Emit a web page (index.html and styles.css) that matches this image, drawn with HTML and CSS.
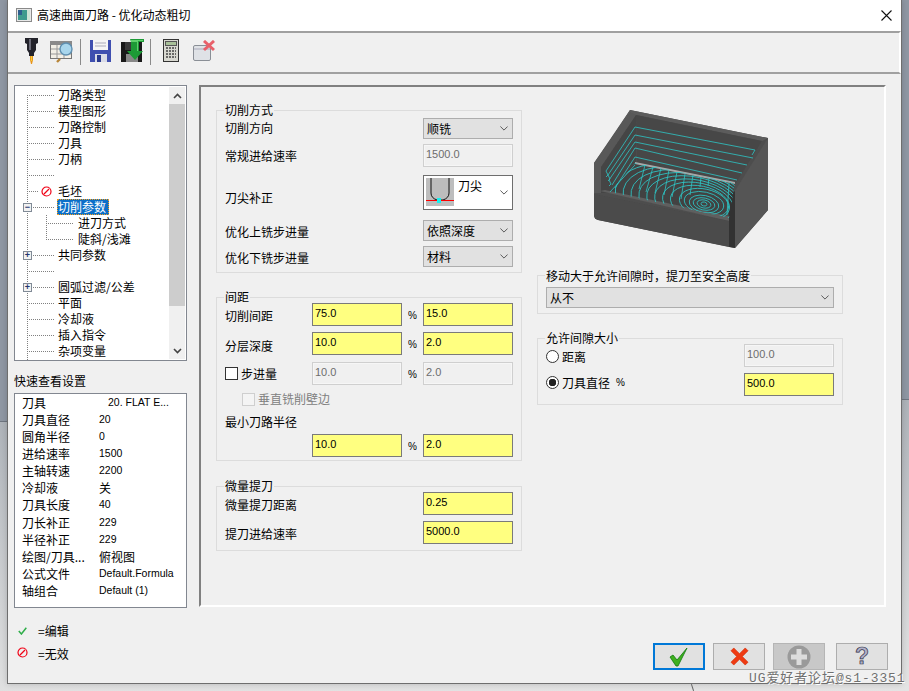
FILE: index.html
```html
<!DOCTYPE html>
<html lang="zh">
<head>
<meta charset="utf-8">
<title>高速曲面刀路 - 优化动态粗切</title>
<link rel="stylesheet" href="styles.css">
</head>
<body>
<div class="window">
  <header class="titlebar">
    <svg class="title-icon" width="16" height="14" viewBox="0 0 16 14"><rect x=".5" y=".5" width="15" height="13" fill="#e8e8e8" stroke="#8a8a8a"/><rect x="2" y="2" width="9" height="10" fill="#3f9a8e"/><rect x="2" y="2" width="4" height="5" fill="#2f5f8f"/><rect x="11" y="2" width="3" height="10" fill="#cfe3d6"/></svg>
    <span class="title-text">高速曲面刀路 - 优化动态粗切</span>
    <svg class="close" width="11" height="11" viewBox="0 0 11 11"><path d="M.5.5l10 10M10.5.5l-10 10" stroke="#111" stroke-width="1.1" fill="none"/></svg>
  </header>

  <div class="toolbar">
    <svg class="tool t-drill" width="13" height="26" viewBox="0 0 13 26"><path d="M0 0h13v5l-2 1v6l-2 3v3H4v-3l-2-3V6L0 5z" fill="#23232b"/><path d="M4 1h2v11H4z" fill="#6b6b78"/><path d="M5 18h3v4l-1 4h-1l-1-4z" fill="#e8941c"/><path d="M6 18h1v5H6z" fill="#f7d23a"/></svg>
    <svg class="tool t-table" width="24" height="23" viewBox="0 0 24 23"><rect x=".5" y="1.5" width="21" height="17" fill="#f2efe6" stroke="#777"/><path d="M0 1h22v4H0z" fill="#8a8a8a"/><path d="M1 9h20M1 14h20M7 5v13M14 5v13" stroke="#999"/><path d="M10 19l-3 3" stroke="#b8863a" stroke-width="2.4"/><circle cx="16" cy="9" r="6" fill="#a9d6ec" stroke="#5f8fb0" stroke-width="1.4"/></svg>
    <span class="tool-sep"></span>
    <svg class="tool t-save" width="21" height="23" viewBox="0 0 21 23"><path d="M0 1h21v22H0z" fill="#3f4fb0"/><path d="M3 1h15v10H3z" fill="#f4f4f6"/><path d="M5 4h11M5 7h11" stroke="#aab"/><path d="M5 15h12v8H5z" fill="#d9dbe6"/><path d="M7 16h4v7H7z" fill="#2a3a90"/></svg>
    <svg class="tool t-saveas" width="24" height="24" viewBox="0 0 24 24"><path d="M0 3h21v20H0z" fill="#191919"/><path d="M4 3h12v8H4z" fill="#3a3a3a"/><path d="M5 15h12v8H5z" fill="#888"/><path d="M9 0h14v3h-5v9h4L14 21 6 12h4V3z" fill="#1d9a36"/><path d="M10 1h12v1h-5v10h-1V3h-6z" fill="#5fd26d"/></svg>
    <span class="tool-sep t-sep2"></span>
    <svg class="tool t-calc" width="16" height="23" viewBox="0 0 16 23"><rect x=".5" y=".5" width="15" height="22" fill="#d8d8d0" stroke="#333"/><rect x="2.5" y="2.5" width="11" height="4" fill="#a8c098" stroke="#555"/><path d="M3 9h10M3 12h10M3 15h10M3 18h10" stroke="#444" stroke-width="1.6" stroke-dasharray="2 1"/></svg>
    <svg class="tool t-close" width="22" height="21" viewBox="0 0 22 21"><rect x=".5" y="5.500" width="17" height="15" rx="1.500" fill="#dfe2e6" stroke="#8a8f96"/><path d="M1 9h16" stroke="#aab"/><path d="M11 1l10 9M21 1l-10 9" stroke="#e8606a" stroke-width="3"/></svg>
  </div>

  <div class="content">
    <aside class="side">
      <div class="tree">
        <ul class="tree-list">
          <li class="node"><span class="conn"></span>刀路类型</li>
          <li class="node"><span class="conn"></span>模型图形</li>
          <li class="node"><span class="conn"></span>刀路控制</li>
          <li class="node"><span class="conn"></span>刀具</li>
          <li class="node"><span class="conn"></span>刀柄</li>
          <li class="node"><span class="conn"></span></li>
          <li class="node"><span class="conn conn-icon"></span><svg class="ban" width="11" height="11" viewBox="0 0 11 11"><circle cx="5.500" cy="5.500" r="4.500" fill="none" stroke="#f00115" stroke-width="1.200"/><path d="M3 8l5-5" stroke="#f00115" stroke-width="1.200"/></svg>毛坯</li>
          <li class="node"><span class="toggle">−</span><span class="conn"></span><span class="selected">切削参数</span></li>
          <li class="node child"><span class="conn"></span>进刀方式</li>
          <li class="node child last"><span class="conn"></span>陡斜/浅滩</li>
          <li class="node"><span class="toggle">+</span><span class="conn"></span>共同参数</li>
          <li class="node"><span class="conn"></span></li>
          <li class="node"><span class="toggle">+</span><span class="conn"></span>圆弧过滤/公差</li>
          <li class="node"><span class="conn"></span>平面</li>
          <li class="node"><span class="conn"></span>冷却液</li>
          <li class="node"><span class="conn"></span>插入指令</li>
          <li class="node"><span class="conn"></span>杂项变量</li>
        </ul>
        <div class="scrollbar">
          <span class="arrow">
            <svg width="9" height="6" viewBox="0 0 9 6"><path d="M1 5l3.500-3.500L8 5" fill="none" stroke="#444" stroke-width="1.600"/></svg>
          </span>
          <span class="thumb"></span>
          <span class="arrow arrow-down">
            <svg width="9" height="6" viewBox="0 0 9 6"><path d="M1 1l3.500 3.500L8 1" fill="none" stroke="#444" stroke-width="1.600"/></svg>
          </span>
        </div>
      </div>

      <div class="quick-title">快速查看设置</div>
      <dl class="quick">
        <div class="q-row q-first"><dt>刀具</dt><dd>20. FLAT E...</dd></div>
        <div class="q-row"><dt>刀具直径</dt><dd>20</dd></div>
        <div class="q-row"><dt>圆角半径</dt><dd>0</dd></div>
        <div class="q-row"><dt>进给速率</dt><dd>1500</dd></div>
        <div class="q-row"><dt>主轴转速</dt><dd>2200</dd></div>
        <div class="q-row"><dt>冷却液</dt><dd class="cjk">关</dd></div>
        <div class="q-row"><dt>刀具长度</dt><dd>40</dd></div>
        <div class="q-row"><dt>刀长补正</dt><dd>229</dd></div>
        <div class="q-row"><dt>半径补正</dt><dd>229</dd></div>
        <div class="q-row"><dt>绘图/刀具...</dt><dd class="cjk">俯视图</dd></div>
        <div class="q-row"><dt>公式文件</dt><dd>Default.Formula</dd></div>
        <div class="q-row"><dt>轴组合</dt><dd>Default (1)</dd></div>
      </dl>

      <div class="legend-row legend-edit">
        <svg width="9" height="8" viewBox="0 0 9 8"><path d="M.8 4l2.600 3L8.300.8" fill="none" stroke="#2fae4a" stroke-width="1.500"/></svg>
        <span>=编辑</span>
      </div>
      <div class="legend-row legend-off">
        <svg class="off-icon" width="11" height="11" viewBox="0 0 11 11"><circle cx="5.500" cy="5.500" r="4.500" fill="none" stroke="#f00115" stroke-width="1.200"/><path d="M3 8l5-5" stroke="#f00115" stroke-width="1.200"/></svg>
        <span>=无效</span>
      </div>
    </aside>

    <div class="main-col">
      <main class="panel">
        <div class="col col-left">
          <fieldset class="group g-cut">
            <legend>切削方式</legend>
            <div class="row r-dir"><label>切削方向</label><div class="select">顺铣<svg class="chev" width="8" height="5" viewBox="0 0 10 6"><path d="M.5.500L5 5 9.500.500" fill="none" stroke="#555" stroke-width="1.200"/></svg></div></div>
            <div class="row r-feed"><label>常规进给速率</label><div class="input off">1500.0</div></div>
            <div class="row r-tip"><label class="tip-label">刀尖补正</label>
              <div class="tip-select">
                <svg class="tip-img" width="28" height="28" viewBox="0 0 28 28"><rect width="28" height="28" fill="#bdbdbd"/><path d="M5 0v15q0 5 6 7h6q6-2 6-7V0" fill="none" stroke="#111"/><path d="M0 22.500h28" stroke="#f00"/><rect x="11" y="20" width="4" height="5" fill="#18f0f0"/></svg>
                <span class="tip-text">刀尖</span>
                <svg class="chev" width="8" height="5" viewBox="0 0 10 6"><path d="M.5.500L5 5 9.500.500" fill="none" stroke="#555" stroke-width="1.200"/></svg>
              </div>
            </div>
            <div class="row r-up"><label>优化上铣步进量</label><div class="select">依照深度<svg class="chev" width="8" height="5" viewBox="0 0 10 6"><path d="M.5.500L5 5 9.500.500" fill="none" stroke="#555" stroke-width="1.200"/></svg></div></div>
            <div class="row r-down"><label>优化下铣步进量</label><div class="select">材料<svg class="chev" width="8" height="5" viewBox="0 0 10 6"><path d="M.5.500L5 5 9.500.500" fill="none" stroke="#555" stroke-width="1.200"/></svg></div></div>
          </fieldset>

          <fieldset class="group g-gap">
            <legend>间距</legend>
            <div class="grid-row gr-1"><label>切削间距</label><div class="input yellow">75.0</div><span class="pct">%</span><div class="input yellow">15.0</div></div>
            <div class="grid-row gr-2"><label>分层深度</label><div class="input yellow">10.0</div><span class="pct">%</span><div class="input yellow">2.0</div></div>
            <div class="grid-row gr-3"><label class="check-label"><span class="checkbox"></span>步进量</label><div class="input off">10.0</div><span class="pct">%</span><div class="input off">2.0</div></div>
            <div class="wall-row"><span class="checkbox disabled"></span>垂直铣削壁边</div>
            <div class="min-label">最小刀路半径</div>
            <div class="grid-row gr-5"><span></span><div class="input yellow">10.0</div><span class="pct">%</span><div class="input yellow">2.0</div></div>
          </fieldset>

          <fieldset class="group g-micro">
            <legend>微量提刀</legend>
            <div class="row r-m1"><label>微量提刀距离</label><div class="input yellow">0.25</div></div>
            <div class="row r-m2"><label>提刀进给速率</label><div class="input yellow">5000.0</div></div>
          </fieldset>
        </div>

        <div class="col col-right">
          <svg class="part" width="185" height="145" viewBox="0 0 185 145">
            <defs>
              <clipPath id="floor"><path d="M45 58L145 78 139 113 20 87z"/></clipPath>
              <filter id="soft"><feGaussianBlur stdDeviation=".3"/></filter>
            </defs>
            <g filter="url(#soft)">
              <path d="M40 5L178 33V105L145 143 8 115Q4 114 4 110V58z" fill="#4e4e4e"/>
              <path d="M40 5L178 33 172 36 46 10 11 62v24l-7-26z" fill="#5c5c5c"/>
              <path d="M46 10L172 36 146 78 47 58z" fill="#474747"/>
              <path d="M40 7l6 3-35 52v26H4V58z" fill="#585858"/>
              <path d="M46 10v48L22 88H11V62z" fill="#454545"/>
              <path d="M45 58L145 78 139 113 20 87z" fill="#424242"/>
              <path d="M145 86L178 33V105L145 143z" fill="#545454"/>
              <path d="M139 90l6-4v57l-6-1z" fill="#333"/>
              <path d="M10 86l5-1 124 26v5z" fill="#5e5e5e"/>
              <path d="M4 89l135 27v26L8 115q-4-1-4-5z" fill="#4b4b4b"/>
              <path d="M45 57L145 77v2L45 59z" fill="#a8a8a8"/>
              <g fill="none" stroke="#2dc7c7" stroke-width=".8">
                <path d="M45 22L165 45 162 50M45 30L163 53M45 37L157 60M45 43L152 68M45 52L147 75"/>
                <path d="M45 22L16 66l2 4-2 2M45 30L18 70l2 4-2 2M45 37L19 75l2 4-2 2M45 43L22 80M45 52L25 83"/>
                <g clip-path="url(#floor)">
                  <ellipse cx="114" cy="99" rx="3" ry="2" transform="rotate(12 114 99)"/>
                  <ellipse cx="114" cy="99" rx="7" ry="4" transform="rotate(12 114 99)"/>
                  <ellipse cx="114" cy="99" rx="11" ry="6" transform="rotate(12 114 99)"/>
                  <ellipse cx="114" cy="99" rx="15" ry="8.500" transform="rotate(12 114 99)"/>
                  <ellipse cx="114" cy="98" rx="20" ry="11" transform="rotate(12 114 98)"/>
                  <ellipse cx="114" cy="98" rx="25" ry="14" transform="rotate(12 114 98)"/>
                  <ellipse cx="110" cy="98" rx="30" ry="17" transform="rotate(12 110 98)"/>
                  <ellipse cx="108" cy="98" rx="36" ry="20" transform="rotate(12 108 98)"/>
                  <ellipse cx="106" cy="98" rx="42" ry="23" transform="rotate(12 106 98)"/>
                  <ellipse cx="104" cy="98" rx="48" ry="26" transform="rotate(12 104 98)"/>
                  <ellipse cx="102" cy="98" rx="54" ry="29" transform="rotate(12 102 98)"/>
                  <ellipse cx="100" cy="98" rx="60" ry="32" transform="rotate(12 100 98)"/>
                  <ellipse cx="98" cy="98" rx="66" ry="35" transform="rotate(12 98 98)"/>
                  <ellipse cx="96" cy="98" rx="72" ry="38" transform="rotate(12 96 98)"/>
                  <ellipse cx="94" cy="98" rx="78" ry="41" transform="rotate(12 94 98)"/>
                  <path d="M55 60l-6 24M63 62l-7 25M71 63l-6 25M79 65l-5 25M87 67l-5 25M95 69l-4 25M103 70l-3 20M111 72l-1 10M119 73l-1 8"/>
                </g>
                <path d="M139 78L137 110M20 87L45 60"/>
              </g>
            </g>
          </svg>

          <fieldset class="group g-move">
            <legend>移动大于允许间隙时，提刀至安全高度</legend>
            <div class="select wide">从不<svg class="chev" width="8" height="5" viewBox="0 0 10 6"><path d="M.5.500L5 5 9.500.500" fill="none" stroke="#555" stroke-width="1.200"/></svg></div>
          </fieldset>

          <fieldset class="group g-clear">
            <legend>允许间隙大小</legend>
            <div class="row r-c1"><label class="radio-label"><span class="radio"></span>距离</label><div class="input off">100.0</div></div>
            <div class="row r-c2"><label class="radio-label"><span class="radio on"></span>刀具直径 <span class="pct-inline">%</span></label><div class="input yellow">500.0</div></div>
          </fieldset>
        </div>
      </main>

      <footer class="buttons">
        <button class="btn default" type="button">
          <svg width="20" height="20" viewBox="0 0 20 20"><path d="M1 10l3-2 4 5L18 1 9 19H7z" fill="#3fb01f" stroke="#0f7a0f" stroke-width=".8"/></svg>
        </button>
        <button class="btn" type="button">
          <svg width="19" height="19" viewBox="0 0 20 20"><path d="M1 4l3-3 6 6 6-6 3 3-6 6 6 6-3 3-6-6-6 6-3-3 6-6z" fill="#ef3a12" stroke="#d02800" stroke-width=".6"/></svg>
        </button>
        <button class="btn disabled" type="button" disabled>
          <svg width="24" height="24" viewBox="0 0 24 24"><circle cx="12" cy="12" r="11.500" fill="#9a9a9a"/><path d="M9.500 4h5v5.500H20v5h-5.500V20h-5v-5.500H4v-5h5.500z" fill="#dcdcdc"/></svg>
        </button>
        <button class="btn help" type="button">?</button>
      </footer>
    </div>
  </div>
  <div class="watermark">UG爱好者论坛@s1-3351</div>
</div>
<div class="desk-line"></div>
</body>
</html>
```

FILE: styles.css
```css
* { box-sizing: border-box; }
html, body { margin: 0; padding: 0; }
body {
  width: 909px;
  height: 691px;
  overflow: hidden;
  position: relative;
  background: linear-gradient(178.6deg, #8f97a3 0, #8f97a3 421px, #6f7680 421px, #6f7680 422px, #aeb3b9 422px, #e4e4e4 100%);
  font: 12px/16px "Noto Sans CJK SC", "Liberation Sans", sans-serif;
  color: #000;
  padding-left: 7px;
}
.window {
  width: 895px;
  height: 684px;
  background: #f0f0f0;
  border: 1px solid #6e6e6e;
  border-top: 0;
  position: relative;
  display: flex;
  flex-direction: column;
  box-shadow: 0 0 6px rgba(0,0,0,.18);
}
.titlebar {
  height: 31px;
  flex: none;
  background: #fff;
  display: flex;
  align-items: center;
  padding: 0 9px 1px 8px;
}
.title-icon { flex: none; }
.title-text { margin-left: 5px; }
.close { margin-left: auto; }

.toolbar {
  height: 43px;
  flex: none;
  background: #f0f0f0;
  border-top: 2px solid #a0a0a0;
  border-bottom: 2px solid #a0a0a0;
  border-right: 2px solid #fff;
  display: flex;
  align-items: flex-start;
  padding-top: 5px;
}
.tool { flex: none; display: block; }
.t-drill { margin-left: 17px; }
.t-table { margin-left: 12px; margin-top: 2px; }
.tool-sep { width: 1px; height: 26px; background: #8a8a8a; margin: 1px 9px 0 6px; flex: none; }
.t-save { margin-top: 1px; }
.t-saveas { margin-left: 10px; margin-top: 1px; }
.t-sep2 { margin: 1px 12px 0 5px; }
.t-calc { margin-top: 1px; }
.t-close { margin-left: 14px; margin-top: 2px; }

.content { flex: 1; display: flex; min-height: 0; }
.side { width: 191px; flex: none; padding: 11px 0 0 6px; }
.main-col { flex: 1; min-width: 0; display: flex; flex-direction: column; }

.tree {
  width: 173px;
  height: 276px;
  background: #fff;
  border: 1px solid #828790;
  display: flex;
  overflow: hidden;
}
.tree-list {
  flex: 1;
  list-style: none;
  margin: 0;
  padding: 1px 0 0;
  background: repeating-linear-gradient(to bottom, #808080 0 1px, transparent 1px 2px) 12px 9px / 1px 100% no-repeat;
}
.node {
  height: 16px;
  display: flex;
  align-items: center;
  position: relative;
  padding-left: 12px;
  white-space: nowrap;
}
.conn {
  width: 27px;
  height: 1px;
  flex: none;
  margin-right: 4px;
  background: repeating-linear-gradient(to right, #808080 0 1px, transparent 1px 2px);
}
.conn-icon { width: 12px; margin-right: 0; }
.ban { margin: 0 6px 0 2px; flex: none; }
.toggle {
  position: absolute;
  left: 8px;
  top: 4px;
  width: 9px;
  height: 9px;
  border: 1px solid #808a96;
  background: #f2f2f2;
  font: bold 9px/7px "Liberation Sans", sans-serif;
  color: #22356e;
  text-align: center;
}
.selected {
  background: #0b6fc9;
  color: #fff;
  outline: 1px dotted #f6a01e;
  outline-offset: -1px;
  margin-left: -1px;
  padding: 0 3px 0 1px;
  line-height: 16px;
}
.child { padding-left: 31px; }
.child .conn { margin-right: 5px; }
.child::before {
  content: "";
  position: absolute;
  left: 31px;
  top: 0;
  width: 1px;
  height: 16px;
  background: repeating-linear-gradient(to bottom, #808080 0 1px, transparent 1px 2px);
}
.child.last::before { height: 9px; }
.scrollbar {
  width: 16px;
  flex: none;
  margin: 1px 1px 1px 0;
  background: #f0f0f0;
  display: flex;
  flex-direction: column;
  align-items: center;
}
.arrow { height: 17px; display: flex; align-items: center; justify-content: center; flex: none; }
.arrow-down { margin-top: auto; }
.thumb { width: 16px; height: 202px; background: #cdcdcd; flex: none; }

.quick-title { margin-top: 12px; height: 16px; }
.quick {
  width: 173px;
  height: 215px;
  margin: 4px 0 0;
  background: #fff;
  border: 1px solid #828790;
  padding: 0 0 0 7px;
}
.q-row { height: 17.090px; display: flex; line-height: 17px; }
.q-row dt { width: 77px; flex: none; white-space: nowrap; }
.q-row dd { margin: 0; white-space: nowrap; font-family: "Liberation Sans", "Noto Sans CJK SC", sans-serif; font-size: 10.500px; }
.q-row dd.cjk { font-family: "Noto Sans CJK SC", sans-serif; font-size: 12px; }
.q-first dd { margin-left: 9px; }

.legend-row { display: flex; align-items: center; height: 16px; }
.legend-row svg { flex: none; }
.legend-edit { margin-top: 15px; padding-left: 4px; }
.legend-edit span { margin-left: 11px; }
.legend-off { margin-top: 7px; padding-left: 3px; }
.legend-off span { margin-left: 10px; }
.off-icon { margin-top: -4px; }

.panel {
  width: 687px;
  height: 522px;
  margin-top: 11px;
  flex: none;
  border-top: 2px solid #808080;
  border-left: 2px solid #808080;
  border-right: 2px solid #fff;
  border-bottom: 2px solid #fff;
  display: flex;
  padding: 15px 0 0 15px;
  background: #f0f0f0;
}
.col { display: flex; flex-direction: column; flex: none; }
.col-left { width: 306px; }
.col-right { width: 306px; margin-left: 15px; }

.group {
  margin: 0;
  padding: 0 8px;
  border: 1px solid #dcdcdc;
  min-width: 0;
  width: 306px;
  flex: none;
}
.group legend {
  padding: 0 1px;
  margin-left: -1px;
  line-height: 16px;
  height: 16px;
  white-space: nowrap;
}
.g-move legend { line-height: 18px; }
.g-cut { height: 171px; }
.g-gap { height: 172px; margin-top: 16px; }
.g-micro { height: 73px; margin-top: 17px; }
.g-move { height: 47px; margin-top: 17px; }
.g-clear { height: 75px; margin-top: 16px; }

.row { display: flex; justify-content: space-between; align-items: center; }
.row > label, .grid-row > label { white-space: nowrap; display: flex; align-items: center; padding-top: 2px; }
.r-dir { height: 21px; }
.r-dir > label { padding-top: 0; padding-bottom: 1px; }
.r-feed { height: 23px; margin-top: 5px; }
.r-feed > label { padding-top: 1px; }
.r-tip { height: 35px; margin-top: 8px; }
.row > .tip-label { margin-top: 11px; padding-top: 0; }
.r-up { height: 21px; margin-top: 10px; }
.r-down { height: 21px; margin-top: 5px; }
.r-down > label { padding-top: 3px; }

.select {
  width: 90px;
  height: 100%;
  background: #e1e1e1;
  border: 1px solid #adadad;
  padding: 0 4px 0 3px;
  display: flex;
  align-items: center;
  justify-content: space-between;
}
.select.wide { width: 288px; height: 21px; }
.chev { flex: none; }

.input {
  width: 90px;
  height: 23px;
  flex: none;
  border: 1px solid #7a7a7a;
  padding: 1px 2px 0;
  line-height: 16px;
  font-family: "Liberation Sans", sans-serif;
  font-size: 11px;
}
.yellow { background: #ffff80; color: #000; }
.off { background: #f0f0f0; border-color: #cfcfcf; color: #6d6d6d; box-shadow: inset 0 0 0 1px #f6f6f6; }

.tip-select {
  width: 90px;
  height: 35px;
  background: #fff;
  border: 1px solid #6e6e6e;
  display: flex;
  padding: 2px 4px 0 2px;
}
.tip-img { flex: none; }
.tip-text { margin-left: 4px; }
.tip-select .chev { margin-left: auto; margin-top: 12px; }

.grid-row {
  display: grid;
  grid-template-columns: 87px 90px 21px 90px;
  align-items: center;
  height: 23px;
}
.pct { text-align: center; font-size: 10px; font-family: "Liberation Sans", sans-serif; padding-top: 2px; }
.g-gap legend, .g-micro legend, .g-clear legend { margin-bottom: -2px; }
.gr-2 { margin-top: 6px; }
.grid-row.gr-2 > label { padding-top: 5px; }
.gr-3 { margin-top: 7px; }
.grid-row.gr-3 > label { padding-top: 0; }
.checkbox {
  width: 13px;
  height: 13px;
  background: #fff;
  border: 1px solid #333;
  margin-right: 3px;
  flex: none;
}
.wall-row { display: flex; align-items: center; margin: 6px 0 0 17px; height: 16px; color: #808080; }
.checkbox.disabled { border-color: #cfcfcf; background: #f4f4f4; }
.min-label { margin-top: 7px; height: 16px; }
.gr-5 { margin-top: 4px; }

.r-m1 { height: 23px; }
.r-m2 { height: 23px; margin-top: 6px; }

.part { display: block; flex: none; margin: 3px 0 0 53px; height: 145px; }
.g-move .select { margin-top: 4px; }
.r-c1 { height: 23px; }
.r-c2 { height: 23px; margin-top: 6px; }
.row > .radio-label { gap: 2px; padding-top: 2px; }
.r-c2 > .radio-label { padding-top: 0; padding-bottom: 4px; }
.radio {
  width: 13px;
  height: 13px;
  border-radius: 50%;
  border: 1px solid #333;
  background: #fff;
  margin-right: 1px;
  flex: none;
  display: block;
}
.radio.on { background: radial-gradient(circle, #222 0 3.500px, #fff 4px); }
.pct-inline { font-size: 10px; margin-left: 4px; font-family: "Liberation Sans", sans-serif; }

.buttons {
  display: flex;
  padding-left: 454px;
  margin-top: 36px;
  height: 27px;
  flex: none;
}
.btn {
  width: 52px;
  height: 27px;
  padding: 0;
  margin: 0 8px 0 0;
  background: #e1e1e1;
  border: 1px solid #adadad;
  display: flex;
  align-items: center;
  justify-content: center;
}
.btn.default { border: 2px solid #0078d7; }
.btn.disabled { background: #c8c8c8; border-color: #b5b5b5; }
.btn.help {
  margin: 0 0 0 3px;
  font: bold 23px/25px "Liberation Sans", sans-serif;
  color: #b0b0c8;
  -webkit-text-stroke: .7px #33334a;
}
.watermark {
  position: absolute;
  left: 741px;
  bottom: -4px;
  width: 160px;
  font: 13px/16px "Liberation Mono", "Noto Sans CJK SC", monospace;
  letter-spacing: .9px;
  color: #707070;
  text-shadow: 1px 1px 0 #fff;
  white-space: nowrap;
}
.desk-line {
  position: absolute;
  left: 692px;
  top: 684px;
  width: 1px;
  height: 7px;
  background: #666;
  transform: rotate(-18deg);
}
```
